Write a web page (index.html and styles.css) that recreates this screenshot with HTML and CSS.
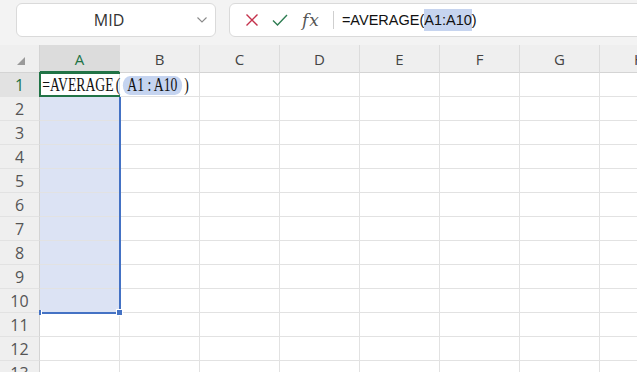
FILE: index.html
```html
<!DOCTYPE html>
<html lang="en">
<head>
    <meta charset="UTF-8">
    <title>Sheet</title>
    <link rel="stylesheet" href="styles.css">
</head>
<body>
    <div class="topbar">
        <div class="namebox">
            <span class="name">MID</span>
            <svg class="chevron" width="10" height="6" viewBox="0 0 10 6"><path d="M0.5 0.5 L5 5 L9.5 0.5" fill="none" stroke="#8a8a8a" stroke-width="1.1"/></svg>
        </div>
        <div class="fxbar">
            <svg class="icon" width="14" height="14" viewBox="0 0 14 14"><path d="M1.5 1.5 L12.5 12.5 M12.5 1.5 L1.5 12.5" stroke="#c4314b" stroke-width="1.4" fill="none"/></svg>
            <svg class="icon" width="16" height="14" viewBox="0 0 16 14"><path d="M1 7.5 L5.5 12 L15 2" stroke="#2e7d52" stroke-width="1.4" fill="none"/></svg>
            <span class="fx">fx</span>
            <span class="sep"></span>
            <span class="formula">=AVERAGE(<span class="hl">A1:A10</span>)</span>
        </div>
    </div>

    <div class="sheet">
        <div class="row head">
            <div class="rh corner"><span class="tri"></span></div>
            <div class="ch sel">A</div><div class="ch">B</div><div class="ch">C</div><div class="ch">D</div>
            <div class="ch">E</div><div class="ch">F</div><div class="ch">G</div><div class="ch">H</div>
        </div>
        <div class="row">
            <div class="rh active">1</div>
            <div class="cell">
                <span class="edit">=AVERAGE<span class="paren">(</span><span class="ref">A1 : A10</span><span class="paren">)</span></span>
            </div>
            <div class="cell"></div><div class="cell"></div><div class="cell"></div><div class="cell"></div><div class="cell"></div><div class="cell"></div><div class="cell"></div>
        </div>
        <div class="row"><div class="rh">2</div><div class="cell inrange"></div><div class="cell"></div><div class="cell"></div><div class="cell"></div><div class="cell"></div><div class="cell"></div><div class="cell"></div><div class="cell"></div></div>
        <div class="row"><div class="rh">3</div><div class="cell inrange"></div><div class="cell"></div><div class="cell"></div><div class="cell"></div><div class="cell"></div><div class="cell"></div><div class="cell"></div><div class="cell"></div></div>
        <div class="row"><div class="rh">4</div><div class="cell inrange"></div><div class="cell"></div><div class="cell"></div><div class="cell"></div><div class="cell"></div><div class="cell"></div><div class="cell"></div><div class="cell"></div></div>
        <div class="row"><div class="rh">5</div><div class="cell inrange"></div><div class="cell"></div><div class="cell"></div><div class="cell"></div><div class="cell"></div><div class="cell"></div><div class="cell"></div><div class="cell"></div></div>
        <div class="row"><div class="rh">6</div><div class="cell inrange"></div><div class="cell"></div><div class="cell"></div><div class="cell"></div><div class="cell"></div><div class="cell"></div><div class="cell"></div><div class="cell"></div></div>
        <div class="row"><div class="rh">7</div><div class="cell inrange"></div><div class="cell"></div><div class="cell"></div><div class="cell"></div><div class="cell"></div><div class="cell"></div><div class="cell"></div><div class="cell"></div></div>
        <div class="row"><div class="rh">8</div><div class="cell inrange"></div><div class="cell"></div><div class="cell"></div><div class="cell"></div><div class="cell"></div><div class="cell"></div><div class="cell"></div><div class="cell"></div></div>
        <div class="row"><div class="rh">9</div><div class="cell inrange"></div><div class="cell"></div><div class="cell"></div><div class="cell"></div><div class="cell"></div><div class="cell"></div><div class="cell"></div><div class="cell"></div></div>
        <div class="row"><div class="rh">10</div><div class="cell inrange"></div><div class="cell"></div><div class="cell"></div><div class="cell"></div><div class="cell"></div><div class="cell"></div><div class="cell"></div><div class="cell"></div></div>
        <div class="row"><div class="rh">11</div><div class="cell"></div><div class="cell"></div><div class="cell"></div><div class="cell"></div><div class="cell"></div><div class="cell"></div><div class="cell"></div><div class="cell"></div></div>
        <div class="row"><div class="rh">12</div><div class="cell"></div><div class="cell"></div><div class="cell"></div><div class="cell"></div><div class="cell"></div><div class="cell"></div><div class="cell"></div><div class="cell"></div></div>
        <div class="row"><div class="rh">13</div><div class="cell"></div><div class="cell"></div><div class="cell"></div><div class="cell"></div><div class="cell"></div><div class="cell"></div><div class="cell"></div><div class="cell"></div></div>

        <!-- overlays: active cell and referenced range -->
        <div class="active-cell"></div>
        <div class="range"></div>
    </div>
</body>
</html>
```

FILE: styles.css
```css
body {
    margin: 0;
    overflow: hidden;
    background-color: #fff;
    font-family: "Open Sans", "Liberation Sans", sans-serif;
    color: #333;
}

.topbar {
    height: 45px;
    background-color: #f3f3f3;
    display: flex;
    gap: 13px;
    padding: 3px 0 0 16px;
    box-sizing: border-box;
    width: 700px;
}

.namebox {
    width: 200px;
    height: 34px;
    box-sizing: border-box;
    background-color: #fff;
    border: 1px solid #dadada;
    border-radius: 6px;
    display: flex;
    align-items: center;
}

.name {
    flex: 1;
    text-align: center;
    font-size: 16px;
    color: #333;
    padding-left: 4px;
}

.chevron {
    margin-right: 8px;
}

.fxbar {
    width: 460px;
    height: 34px;
    box-sizing: border-box;
    background-color: #fff;
    border: 1px solid #dadada;
    border-radius: 6px;
    display: flex;
    align-items: center;
    padding-left: 15px;
}

.icon {
    margin-right: 13px;
}

.fx {
    font-family: "DejaVu Serif", "Liberation Serif", serif;
    font-style: italic;
    font-size: 17px;
    color: #555;
    margin-left: 1px;
    letter-spacing: 1px;
}

.sep {
    width: 1px;
    height: 18px;
    background-color: #cfcfcf;
    margin: 0 8px 0 13px;
}

.formula {
    font-family: "Liberation Sans", sans-serif;
    font-size: 14.5px;
    color: #111;
}

.hl {
    background-color: #c6d4ef;
    display: inline-block;
    line-height: 22px;
}

.sheet {
    position: relative;
}

.row {
    display: flex;
    height: 24px;
}

.row.head {
    height: 28px;
}

.rh {
    width: 40px;
    flex: none;
    box-sizing: border-box;
    background-color: #efefef;
    border-right: 1px solid #d4d4d4;
    border-bottom: 1px solid #e2e2e2;
    text-align: center;
    font-size: 16px;
    line-height: 24px;
    color: #555;
}

.rh.active {
    background-color: #e2e2e2;
    color: #217346;
}

.corner {
    position: relative;
    border-bottom: 1px solid #d4d4d4;
}

.tri {
    position: absolute;
    left: 17px;
    top: 12px;
    width: 0;
    height: 0;
    border-left: 8px solid transparent;
    border-bottom: 8px solid #9a9a9a;
}

.ch {
    width: 80px;
    flex: none;
    box-sizing: border-box;
    background-color: #efefef;
    border-right: 1px solid #dcdcdc;
    border-bottom: 1px solid #d4d4d4;
    text-align: center;
    font-size: 15px;
    line-height: 28px;
    color: #444;
}

.ch.sel {
    background-color: #dcdcdc;
    color: #217346;
    border-bottom: 2px solid #217346;
}

.cell {
    width: 80px;
    flex: none;
    box-sizing: border-box;
    border-right: 1px solid #e2e2e2;
    border-bottom: 1px solid #e2e2e2;
    background-color: #fff;
}

.cell.inrange {
    background-color: #dce3f4;
}

.edit {
    position: relative;
    z-index: 2;
    display: inline-block;
    white-space: nowrap;
    font-family: "Liberation Serif", "DejaVu Serif", serif;
    font-size: 18px;
    line-height: 24px;
    color: #111;
    padding-left: 3px;
    transform: scaleX(0.76);
    transform-origin: left center;
}

.paren {
    margin: 0 3px;
}

.ref {
    display: inline-block;
    background-color: #c5d4f0;
    border-radius: 11px;
    line-height: 19px;
    padding: 0 6px;
}

.active-cell {
    position: absolute;
    left: 39px;
    top: 27px;
    width: 81px;
    height: 25px;
    box-sizing: border-box;
    border: 2px solid #217346;
    border-right: none;
    pointer-events: none;
}

.range {
    position: absolute;
    left: 40px;
    top: 52px;
    width: 81px;
    height: 217px;
    box-sizing: border-box;
    border-right: 2px solid #4472c4;
    border-bottom: 2px solid #4472c4;
}

.range::after {
    content: "";
    position: absolute;
    right: -4px;
    bottom: -4px;
    width: 5px;
    height: 5px;
    background-color: #4472c4;
    border: 1px solid #fff;
}

.range::before {
    content: "";
    position: absolute;
    left: -1px;
    bottom: -3px;
    width: 2px;
    height: 5px;
    background-color: #4472c4;
    border-right: 1px solid #fff;
}
```
